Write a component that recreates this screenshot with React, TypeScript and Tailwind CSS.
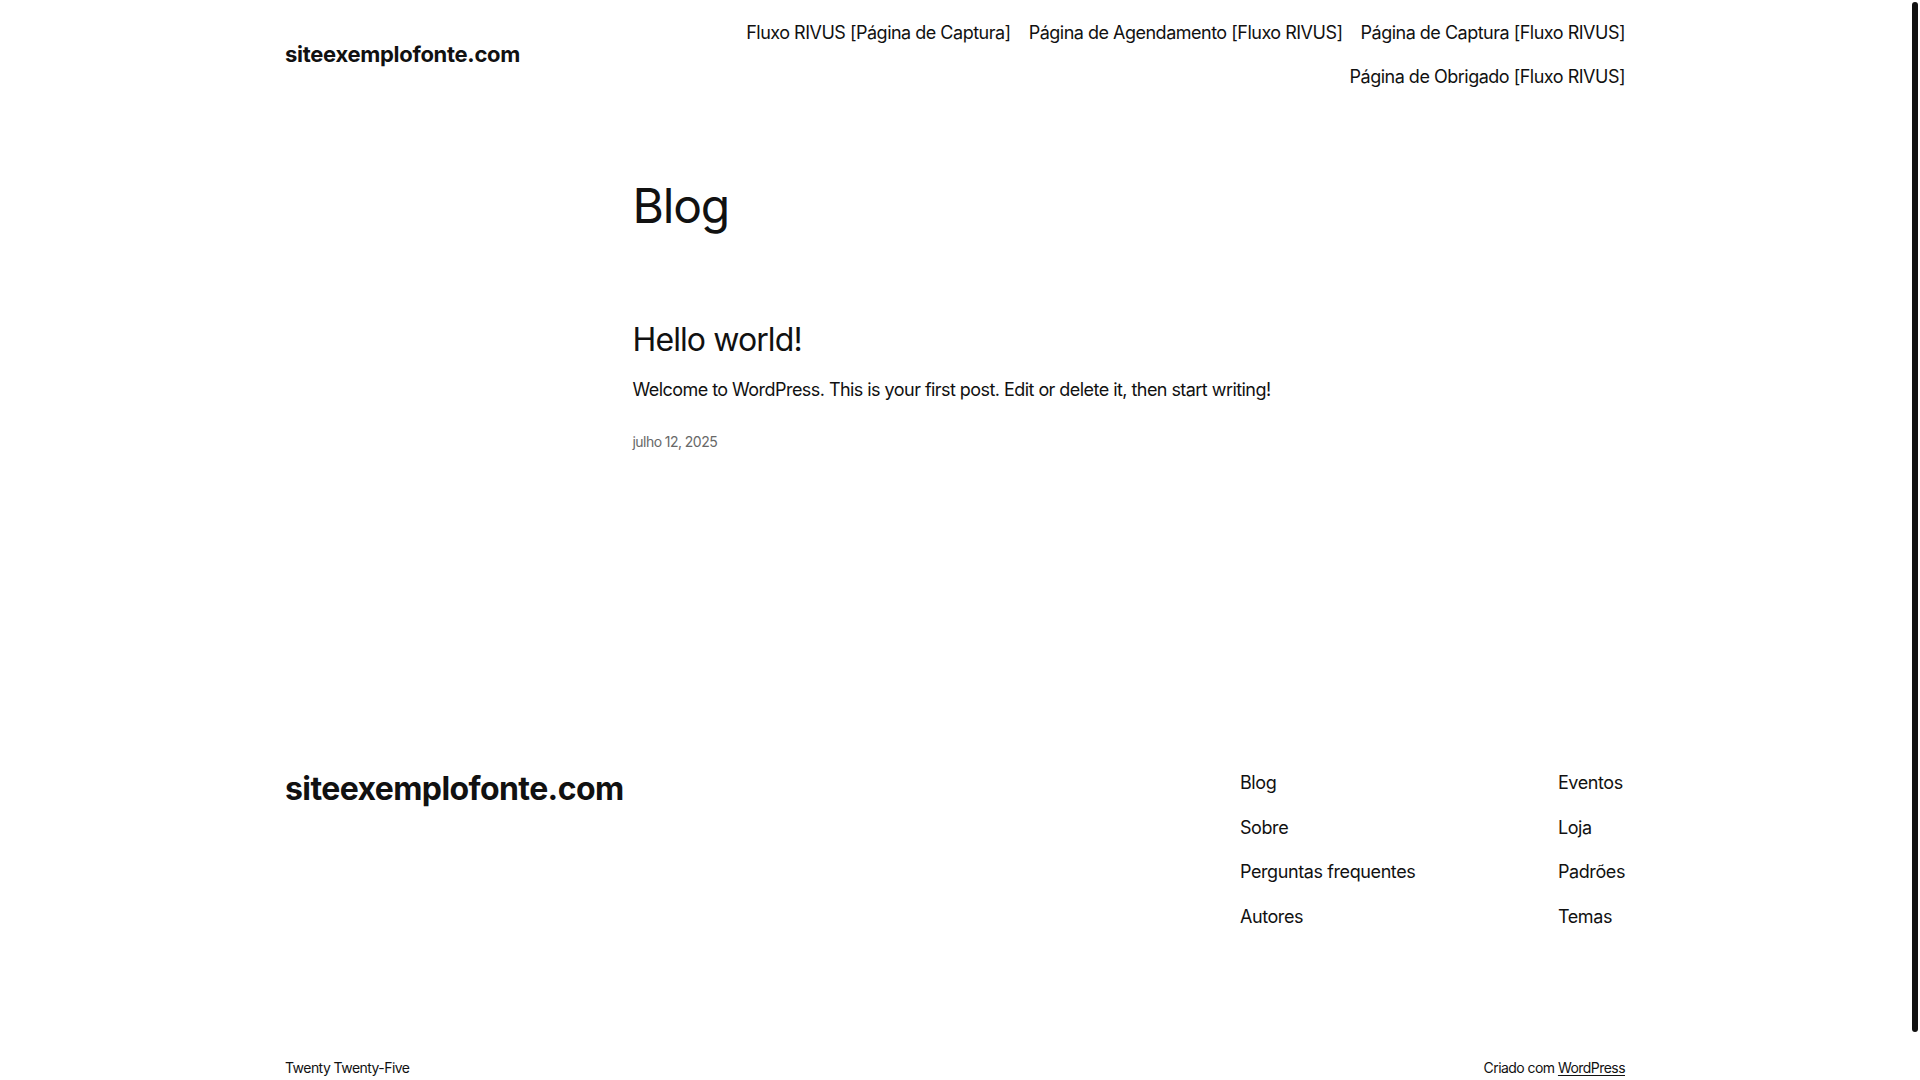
export default function App() {
  const topNav = [
    "Fluxo RIVUS [Página de Captura]",
    "Página de Agendamento [Fluxo RIVUS]",
    "Página de Captura [Fluxo RIVUS]",
    "Página de Obrigado [Fluxo RIVUS]",
  ];
  const col1 = ["Blog", "Sobre", "Perguntas frequentes", "Autores"];
  const col2 = ["Eventos", "Loja", "Padrões", "Temas"];
  return (
    <div
      className="flex h-[1080px] w-[1920px] overflow-hidden bg-white text-[#111111]"
      style={{ fontFamily: "Inter, 'Noto Sans', sans-serif" }}
    >
      <div className="w-[1910px] shrink-0 px-[285px]">
        {/* Header */}
        <header className="flex items-center justify-between pt-[20px]">
          <div className="-mt-[2px] text-[22px] font-bold leading-[30px] tracking-[-0.3px]">siteexemplofonte.com</div>
          <nav className="flex w-[900px] flex-wrap justify-end gap-x-[18px] gap-y-[19px] text-[18px] leading-[25px] tracking-[-0.5px]">
            {topNav.map((t) => (
              <span key={t}>{t}</span>
            ))}
          </nav>
        </header>

        {/* Main */}
        <main className="mx-auto w-[645px]">
          <h1 className="mt-[90px] text-[48px] font-normal leading-[54px] tracking-[-1.2px]">Blog</h1>
          <h2 className="mt-[88px] text-[32px] font-normal leading-[38px] tracking-[-0.9px]">Hello world!</h2>
          <p className="mt-[16px] whitespace-nowrap text-[18px] leading-[29px] tracking-[-0.55px]">
            Welcome to WordPress. This is your first post. Edit or delete it, then start writing!
          </p>
          <div className="mt-[28px] text-[14px] leading-[20px] tracking-[-0.55px] text-[#686868]">julho 12, 2025</div>
        </main>

        {/* Footer */}
        <footer className="mt-[318px]">
          <div className="flex items-start justify-between">
            <div className="text-[32px] font-bold leading-[38px] tracking-[-0.6px]">siteexemplofonte.com</div>
            <div className="flex text-[18px] leading-[25px] tracking-[-0.4px]">
              <ul className="flex w-[318px] flex-col gap-[19.6px]">
                {col1.map((t) => (
                  <li key={t}>{t}</li>
                ))}
              </ul>
              <ul className="flex flex-col gap-[19.6px]">
                {col2.map((t) => (
                  <li key={t}>{t}</li>
                ))}
              </ul>
            </div>
          </div>
          <div className="mt-[129px] flex justify-between text-[14px] leading-[20px] tracking-[-0.55px]">
            <span>Twenty Twenty-Five</span>
            <span>
              Criado com <span className="underline underline-offset-2">WordPress</span>
            </span>
          </div>
        </footer>
      </div>
      <div className="w-[10px] shrink-0">
        <div className="ml-[2px] mt-[2px] h-[1030px] w-[6px] rounded-full bg-[#111111]" />
      </div>
    </div>
  );
}
